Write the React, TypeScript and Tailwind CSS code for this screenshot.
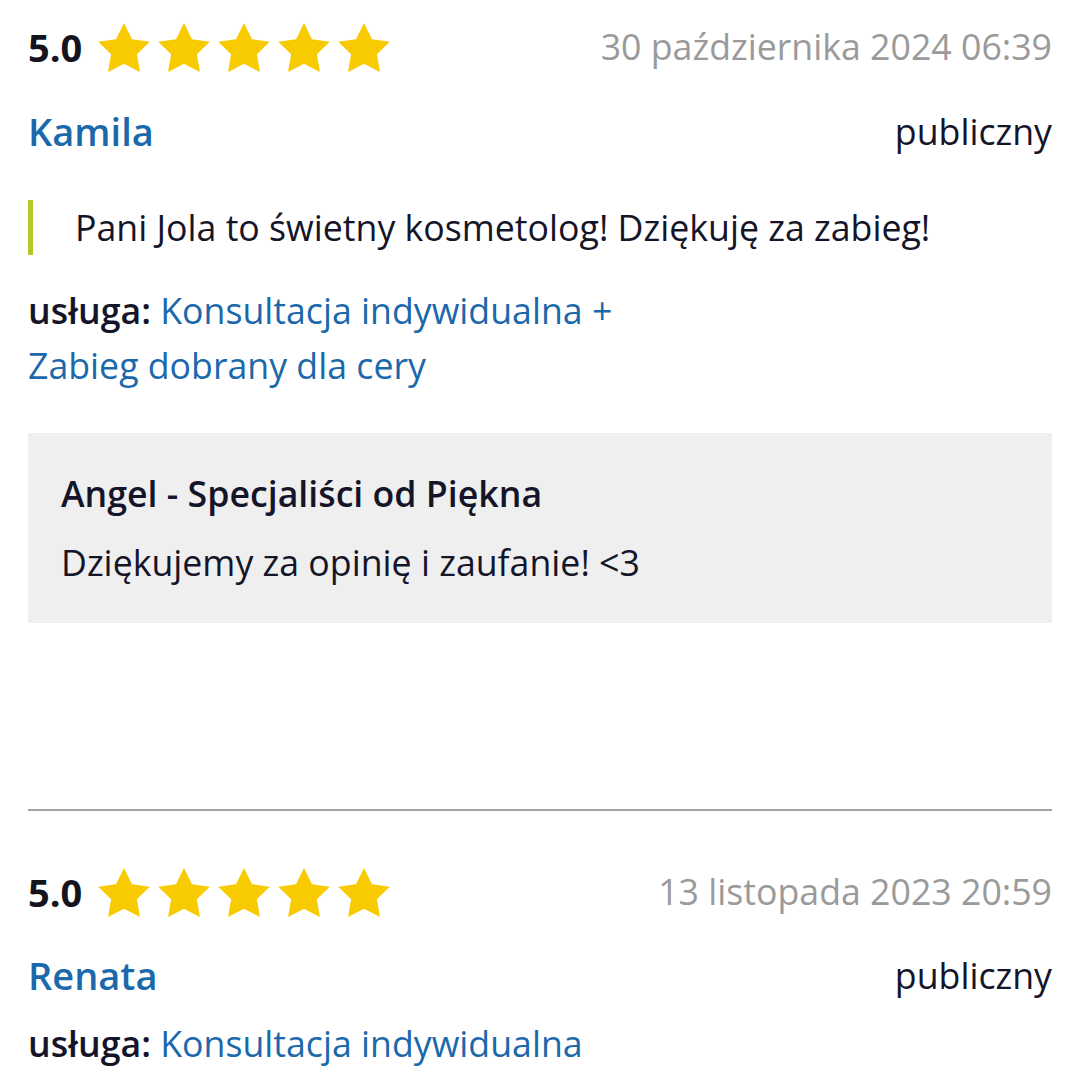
import React from "react";

const Star = () => (
  <svg width="52" height="49" viewBox="2 2 20 19.02" className="shrink-0">
    <polygon
      points="12,2 15.09,8.26 22,9.27 17,14.14 18.18,21.02 12,17.77 5.82,21.02 7,14.14 2,9.27 8.91,8.26"
      fill="#F8CB00"
    />
  </svg>
);

const RatingRow = ({ date }: { date: string }) => (
  <div className="flex h-[94px] items-center justify-between">
    <div className="flex items-center">
      <span className="text-[38px] font-bold leading-none text-[#14141f]">5.0</span>
      <div className="ml-[16px] flex items-center gap-[8px]">
        <Star />
        <Star />
        <Star />
        <Star />
        <Star />
      </div>
    </div>
    <span className="text-[35.7px] leading-none text-[#9a9a9a]">{date}</span>
  </div>
);

const NameRow = ({ name }: { name: string }) => (
  <div className="flex items-center justify-between leading-[50px]">
    <span className="text-[38px] font-semibold text-[#1b68ab]">{name}</span>
    <span className="text-[35.7px] text-[#15152a]">publiczny</span>
  </div>
);

export default function App() {
  return (
    <div
      className="h-[1080px] w-[1080px] overflow-hidden bg-white px-[28px]"
      style={{ fontFamily: '"Open Sans", sans-serif' }}
    >
      <RatingRow date="30 października 2024 06:39" />
      <div className="mt-[12px]">
        <NameRow name="Kamila" />
      </div>
      <div className="mt-[44px] flex">
        <div className="w-[5px] shrink-0 bg-[#b6c829]" />
        <p className="pl-[42px] text-[35.7px] leading-[55px] text-[#15152a]">
          Pani Jola to świetny kosmetolog! Dziękuję za zabieg!
        </p>
      </div>
      <p className="mt-[28px] w-[640px] text-[35.7px] leading-[55px] text-[#1b68ab]">
        <span className="font-semibold text-[#15152a]">usługa:</span> Konsultacja indywidualna +
        Zabieg dobrany dla cery
      </p>
      <div className="mt-[40px] h-[190px] bg-[#efefef] px-[33px] pt-[35px]">
        <p className="text-[35.7px] font-semibold leading-[50px] text-[#15152a]">
          Angel - Specjaliści od Piękna
        </p>
        <p className="mt-[19px] text-[35.7px] leading-[50px] text-[#15152a]">
          Dziękujemy za opinię i zaufanie! &lt;3
        </p>
      </div>
      <div className="mt-[186px] h-[2px] bg-[#a3a3a3]" />
      <div className="mt-[34px]">
        <RatingRow date="13 listopada 2023 20:59" />
      </div>
      <div className="mt-[11px]">
        <NameRow name="Renata" />
      </div>
      <p className="mt-[16px] text-[35.7px] leading-[55px] text-[#1b68ab]">
        <span className="font-semibold text-[#15152a]">usługa:</span> Konsultacja indywidualna
      </p>
    </div>
  );
}
